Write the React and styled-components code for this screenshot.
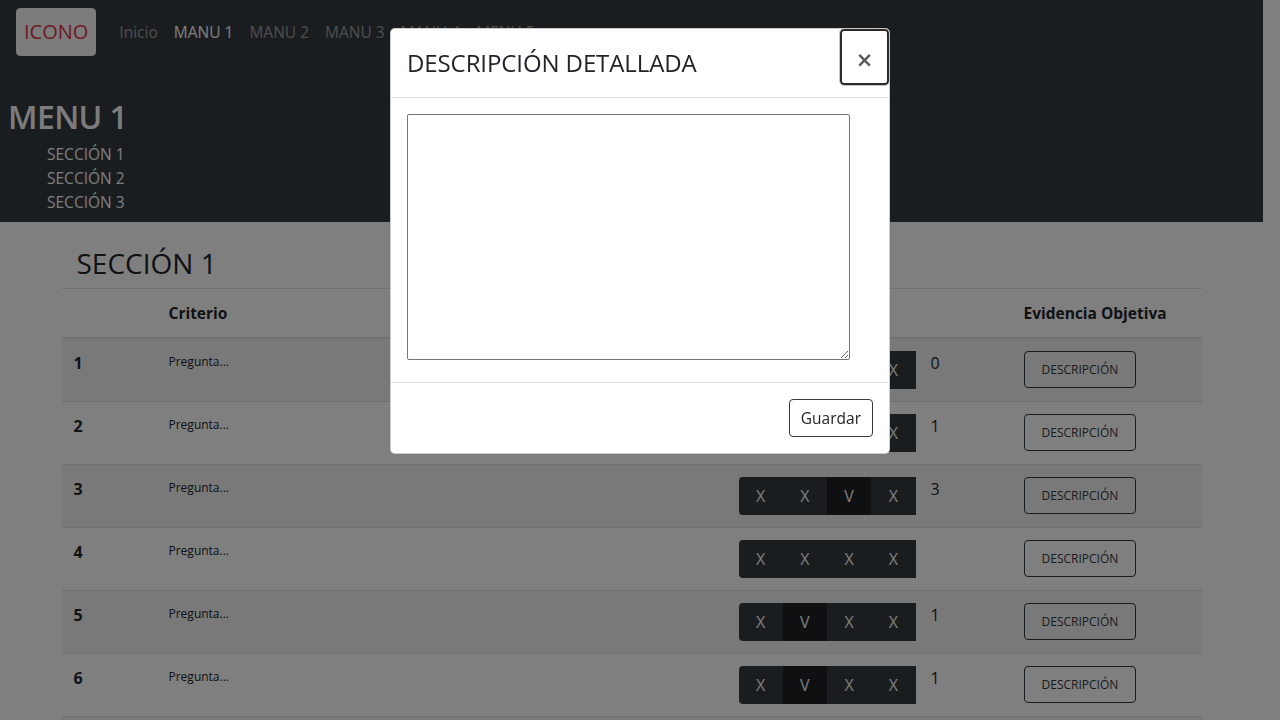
import styled, { createGlobalStyle } from "styled-components";

const GlobalStyle = createGlobalStyle`
  body {
    margin: 0;
    padding-right: 17px;
    overflow: hidden;
    background-color: #fff;
    color: #212529;
    font-family: "Open Sans", "Noto Sans", "Liberation Sans", sans-serif;
    font-size: 16px;
    line-height: 1.5;
  }

  * {
    box-sizing: border-box;
  }
`;

const Header = styled.header`
  background-color: #343a40;
`;

const Navbar = styled.nav`
  display: flex;
  align-items: center;
  padding: 8px 16px;
`;

const Brand = styled.button`
  font-family: inherit;
  font-size: 20px;
  line-height: 1.5;
  color: #dc3545;
  background-color: #f8f9fa;
  border: 1px solid #f8f9fa;
  border-radius: 4px;
  padding: 8px 7px;
  margin-right: 16px;
`;

const NavLink = styled.a`
  padding: 8px;
  font-size: 15.5px;
  line-height: 25px;
  color: ${(p) => (p.$active ? "#fff" : "rgba(255, 255, 255, 0.5)")};
  text-decoration: none;
  &:first-of-type {
    padding-left: 7px;
  }
`;

const HeaderBody = styled.div`
  padding: 34px 8px 8px;
`;

const PageTitle = styled.h2`
  margin: 0;
  font-size: 32px;
  font-weight: 600;
  line-height: 1.2;
  letter-spacing: -0.6px;
  color: #f8f9fa;
`;

const SectionList = styled.ul`
  list-style: none;
  margin: 6px 0 0;
  padding-left: 39px;
`;

const SectionItem = styled.li`
  font-size: 15.5px;
  line-height: 24px;
  color: #f8f9fa;
`;

const Container = styled.main`
  width: 1140px;
  margin: 0 auto;
  padding: 0 15px;
`;

const SectionTitle = styled.h3`
  margin: 25px 0 7px;
  font-size: 28px;
  font-weight: 500;
  line-height: 1.2;
`;

const Table = styled.table`
  width: calc(100% + 30px);
  margin: 0 -15px;
  border-collapse: collapse;
  table-layout: fixed;
`;

const Th = styled.th`
  width: ${(p) => p.$w}px;
  padding: 12px;
  font-size: 15.5px;
  line-height: 24px;
  text-align: left;
  vertical-align: bottom;
  border-top: 1px solid #dee2e6;
  border-bottom: 2px solid #dee2e6;
`;

const Row = styled.tr`
  background-color: ${(p) => (p.$striped ? "rgba(0, 0, 0, 0.05)" : "transparent")};
`;

const Td = styled.td`
  padding: 12px;
  vertical-align: top;
  border-top: 1px solid #dee2e6;
`;

const Num = styled.strong`
  font-weight: 700;
`;

const Question = styled.small`
  display: block;
  font-size: 12px;
  line-height: 22px;
`;

const Rating = styled.div`
  display: flex;
  align-items: flex-start;
  gap: 15px;
`;

const ToggleGroup = styled.div`
  display: flex;
  border-radius: 4px 0 0 4px;
  overflow: hidden;
`;

const Toggle = styled.span`
  width: 44.25px;
  height: 38px;
  display: flex;
  align-items: center;
  justify-content: center;
  color: #f8f9fa;
  background-color: ${(p) => (p.$on ? "#1d2124" : "#343a40")};
`;

const DescButton = styled.button`
  font-family: inherit;
  font-size: 12px;
  line-height: 23px;
  padding: 6px 17px;
  color: #343a40;
  background: transparent;
  border: 1px solid #343a40;
  border-radius: 4px;
`;

const Backdrop = styled.div`
  position: fixed;
  inset: 0;
  background-color: rgba(0, 0, 0, 0.5);
  z-index: 1040;
`;

const Modal = styled.div`
  position: fixed;
  top: 28px;
  left: 50%;
  width: 500px;
  margin-left: -250px;
  background-color: #fff;
  border: 1px solid rgba(0, 0, 0, 0.2);
  border-radius: 5px;
  z-index: 1050;
`;

const ModalHeader = styled.div`
  display: flex;
  align-items: flex-start;
  padding: 16px;
  border-bottom: 1px solid #dee2e6;
`;

const ModalTitle = styled.h4`
  margin: 0;
  font-size: 24px;
  font-weight: 500;
  line-height: 1.5;
  letter-spacing: -0.1px;
`;

const CloseButton = styled.button`
  width: 49px;
  height: 56px;
  margin: -16px -16px -16px auto;
  padding: 6px 0 0;
  font-family: "DejaVu Sans", sans-serif;
  font-size: 21px;
  font-weight: 700;
  line-height: 1;
  color: #000;
  background: transparent;
  border: 2px solid #2b2b2b;
  border-radius: 4px;
  outline: 1px solid #c8c8c8;
  span {
    opacity: 0.65;
  }
`;

const ModalBody = styled.div`
  padding: 16px 16px 22px;
`;

const TextArea = styled.textarea`
  display: block;
  width: 443px;
  height: 246px;
  border: 1px solid #767676;
  border-radius: 2px;
`;

const ModalFooter = styled.div`
  display: flex;
  justify-content: flex-end;
  padding: 16px;
  border-top: 1px solid #dee2e6;
`;

const SaveButton = styled.button`
  font-family: inherit;
  font-size: 15.5px;
  line-height: 24px;
  padding: 6px 11px;
  color: #212529;
  background: #fff;
  border: 1px solid #343a40;
  border-radius: 4px;
`;

const rows = [
  { marks: "XXXX", count: "0" },
  { marks: "XVXX", count: "1" },
  { marks: "XXVX", count: "3" },
  { marks: "XXXX", count: "" },
  { marks: "XVXX", count: "1" },
  { marks: "XVXX", count: "1" },
  { marks: "XXXX", count: "" },
  { marks: "XXXX", count: "" },
];

const App = () => {
  return (
    <>
      <GlobalStyle />
      <Header>
        <Navbar>
          <Brand>ICONO</Brand>
          <NavLink>Inicio</NavLink>
          <NavLink $active>MANU 1</NavLink>
          <NavLink>MANU 2</NavLink>
          <NavLink>MANU 3</NavLink>
          <NavLink>MANU 4</NavLink>
          <NavLink>MENU 5</NavLink>
        </Navbar>
        <HeaderBody>
          <PageTitle>MENU 1</PageTitle>
          <SectionList>
            <SectionItem>SECCIÓN 1</SectionItem>
            <SectionItem>SECCIÓN 2</SectionItem>
            <SectionItem>SECCIÓN 3</SectionItem>
          </SectionList>
        </HeaderBody>
      </Header>

      <Container>
        <SectionTitle>SECCIÓN 1</SectionTitle>
        <Table>
          <thead>
            <tr>
              <Th $w={95}></Th>
              <Th $w={570}>Criterio</Th>
              <Th $w={285}>Calificación</Th>
              <Th $w={190}>Evidencia Objetiva</Th>
            </tr>
          </thead>
          <tbody>
            {rows.map((r, i) => (
              <Row key={i} $striped={i % 2 === 0}>
                <Td>
                  <Num>{i + 1}</Num>
                </Td>
                <Td>
                  <Question>Pregunta...</Question>
                </Td>
                <Td>
                  <Rating>
                    <ToggleGroup>
                      {r.marks.split("").map((m, j) => (
                        <Toggle key={j} $on={m === "V"}>
                          {m}
                        </Toggle>
                      ))}
                    </ToggleGroup>
                    <span>{r.count}</span>
                  </Rating>
                </Td>
                <Td>
                  <DescButton>DESCRIPCIÓN</DescButton>
                </Td>
              </Row>
            ))}
          </tbody>
        </Table>
      </Container>

      <Backdrop />
      <Modal>
        <ModalHeader>
          <ModalTitle>DESCRIPCIÓN DETALLADA</ModalTitle>
          <CloseButton>
            <span>×</span>
          </CloseButton>
        </ModalHeader>
        <ModalBody>
          <TextArea />
        </ModalBody>
        <ModalFooter>
          <SaveButton>Guardar</SaveButton>
        </ModalFooter>
      </Modal>
    </>
  );
};

export default App;
